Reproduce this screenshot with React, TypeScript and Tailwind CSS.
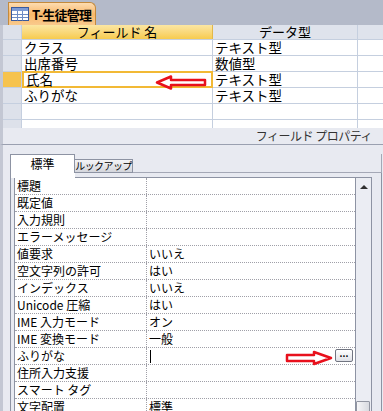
const fields = [
  { name: "クラス", type: "テキスト型" },
  { name: "出席番号", type: "数値型" },
  { name: "氏名", type: "テキスト型", selected: true },
  { name: "ふりがな", type: "テキスト型" },
  { name: "", type: "" },
];

const props = [
  ["標題", ""],
  ["既定値", ""],
  ["入力規則", ""],
  ["エラーメッセージ", ""],
  ["値要求", "いいえ"],
  ["空文字列の許可", "はい"],
  ["インデックス", "いいえ"],
  ["Unicode 圧縮", "はい"],
  ["IME 入力モード", "オン"],
  ["IME 変換モード", "一般"],
  ["ふりがな", "|"],
  ["住所入力支援", ""],
  ["スマート タグ", ""],
  ["文字配置", "標準"],
];

const TableIcon = () => (
  <svg width="18" height="14" viewBox="0 0 18 14">
    <rect x="0.5" y="0.5" width="17" height="13" fill="#ffffff" stroke="#3a5a9c" />
    <rect x="1" y="1" width="16" height="3" fill="#7c9ad4" />
    <path d="M1 7.5h16M1 10.5h16M6.5 4v9.5M11.5 4v9.5" stroke="#6f8cc4" strokeWidth="1" />
  </svg>
);

export default function App() {
  return (
    <div
      className="relative w-[383px] h-[411px] overflow-hidden bg-[#e8eaf1] text-black"
      style={{ fontFamily: '"Noto Sans CJK JP", "Noto Sans", sans-serif' }}
    >
      {/* title tab strip */}
      <div className="h-[25px] bg-[#b4bac9] flex items-end pl-[8px]">
        <div className="h-[23px] w-[88px] rounded-tr-[6px] border border-b-0 border-[#c48a3c] bg-gradient-to-b from-[#fddcb0] via-[#f8b86a] to-[#f9c98c] flex items-center gap-[3px] pl-[2px] whitespace-nowrap">
          <TableIcon />
          <span className="text-[13px] font-bold leading-none tracking-[-0.8px]">T-生徒管理</span>
        </div>
      </div>

      {/* field grid */}
      <div className="flex border-l-[3px] border-[#c3c7d3]">
        <div className="w-[19px] flex flex-col bg-[#dde1ea] border-r border-[#c5cfdf]">
          <div className="h-[15px] border-b border-[#c5cfdf]" />
          {fields.map((f, i) => (
            <div
              key={i}
              className={`h-[16px] border-b border-[#c5cfdf] ${f.selected ? "bg-[#f6c34e]" : ""}`}
            />
          ))}
          <div className="h-[8px]" />
        </div>
        <div className="flex-1 flex flex-col">
          <div className="h-[15px] flex text-[13px] leading-[14px] border-b border-[#c5cfdf]">
            <div className="w-[191px] text-center bg-gradient-to-b from-[#fbe6a2] to-[#f7cb4c] border-r border-[#e2b84a]">
              フィールド 名
            </div>
            <div className="w-[145px] text-center bg-[#dfe3ec] border-r border-[#c5cfdf]">データ型</div>
            <div className="flex-1 bg-[#dfe3ec]" />
          </div>
          {fields.map((f, i) => (
            <div key={i} className="h-[16px] flex bg-white border-b border-[#c5cfdf] text-[13.5px] leading-[15px]">
              <div
                className={`w-[191px] pl-[2px] ${
                  f.selected ? "border-2 border-[#f2b935] -my-[1px] h-[17px] leading-[13px]" : "border-r border-[#c5cfdf] h-[15px]"
                }`}
              >
                {f.name}
              </div>
              <div className="w-[145px] h-[15px] pl-[2px] border-r border-[#c5cfdf]">{f.type}</div>
              <div className="flex-1" />
            </div>
          ))}
          <div className="h-[8px] flex bg-white">
            <div className="w-[191px] border-r border-[#c5cfdf]" />
            <div className="w-[145px] border-r border-[#c5cfdf]" />
          </div>
        </div>
      </div>

      {/* field properties label */}
      <div className="h-[17px] border-b border-[#9aa0b0] border-l-[3px] border-l-[#c3c7d3] flex justify-end items-center pr-[11px]">
        <span className="text-[12px] leading-[14px] text-[#333] tracking-[-0.5px]">フィールド プロパティ</span>
      </div>

      {/* properties panel */}
      <div className="border-l-[3px] border-[#c3c7d3] h-[266px] pl-[7px] pt-[9px] pr-[1px]">
        <div className="flex items-end h-[19px]">
          <div className="w-[65px] h-[19px] bg-white border border-b-0 border-[#8d93a3] text-[12px] text-center leading-[18px]">
            標準
          </div>
          <div className="w-[58px] h-[14px] bg-gradient-to-b from-[#f4f4f6] to-[#d4d6dc] border border-l-0 border-[#8d93a3] text-[10px] leading-[12px] text-center tracking-[-0.6px] whitespace-nowrap">
            ルックアップ
          </div>
          <div className="flex-1 border-b border-[#a4a8b6] border-r h-full" />
        </div>
        <div className="border-l border-r border-[#8d93a3] h-full pl-[3px] pt-[4px] flex relative">
          <div className="absolute left-0 top-0 w-[64px] h-[5px] bg-white" />
          <div className="w-[341px] bg-white border-t border-l border-[#8d93a3] flex flex-col">
            {props.map(([k, v], i) => (
              <div key={i} className="h-[17px] flex border-b border-dotted border-[#a0a0a8] text-[12px] leading-[16px] shrink-0">
                <div className="w-[132px] pl-[2px] border-r border-dotted border-[#a0a0a8] whitespace-nowrap">{k}</div>
                <div className="flex-1 pl-[2px] relative">
                  {v === "|" ? <span className="inline-block w-[1px] h-[13px] bg-black mt-[2px] ml-[1px]" /> : v}
                  {v === "|" && (
                    <div className="absolute right-[2px] top-[1px] w-[18px] h-[13px] rounded-[2px] border border-[#707480] bg-gradient-to-b from-white to-[#e0e2e8] flex items-center justify-center">
                      <span className="text-[9px] font-bold leading-none -mt-[4px]">...</span>
                    </div>
                  )}
                </div>
              </div>
            ))}
          </div>
          <div className="w-[17px] border-t border-l border-r border-[#8d93a3] bg-[#ebedf3] flex flex-col items-center">
            <div className="mt-[7px] w-0 h-0 border-l-[4px] border-r-[4px] border-b-[4px] border-l-transparent border-r-transparent border-b-[#303030]" />
            <div className="flex-1" />
            <div className="w-[14px] h-[17px] mr-[2px] border border-[#9296a2] rounded-[1px] bg-gradient-to-r from-[#f6f6f8] to-[#d8dae0]" />
            <div className="mt-[6px] mb-[2px] w-0 h-0 border-l-[4px] border-r-[4px] border-t-[4px] border-l-transparent border-r-transparent border-t-[#303030]" />
          </div>
        </div>
      </div>

      {/* red annotation arrows */}
      <svg className="absolute left-[155px] top-[75px]" width="52" height="15" viewBox="0 0 52 15">
        <path d="M2 7.5 L16 1.5 L16 5 L50 5 L50 10 L16 10 L16 13.5 Z" fill="#ffffff" stroke="#e8101c" strokeWidth="2.5" strokeLinejoin="round" />
      </svg>
      <svg className="absolute left-[285px] top-[350px]" width="48" height="16" viewBox="0 0 48 16">
        <path d="M46 8 L29 2 L29 5 L2 5 L2 11 L29 11 L29 14 Z" fill="#ffffff" stroke="#e8101c" strokeWidth="2.5" strokeLinejoin="round" />
      </svg>
    </div>
  );
}
